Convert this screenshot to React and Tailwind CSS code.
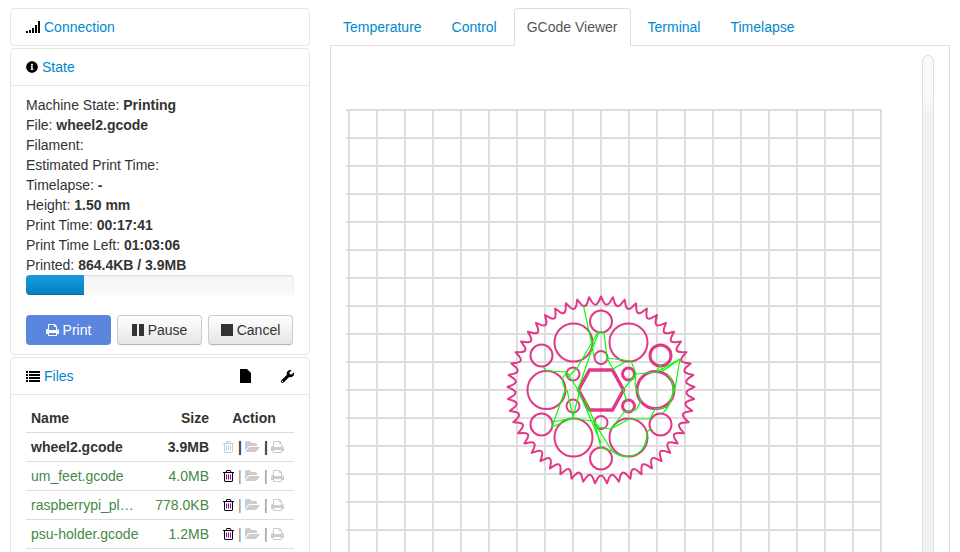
import React from "react";
import { FaInfoCircle, FaWrench } from "react-icons/fa";

function SignalIcon() {
  return (
    <svg width="14" height="12" viewBox="0 0 14 12" fill="#000" shapeRendering="crispEdges" aria-hidden="true">
      <path d="M0 10h2v2H0zM3 9h2v3H3zM6 7h2v5H6zM9 4h2v8H9zM12 0h2v12h-2z" />
    </svg>
  );
}

function ListIcon() {
  return (
    <svg width="14" height="11" viewBox="0 0 14 11" fill="#000" shapeRendering="crispEdges" aria-hidden="true">
      <path d="M0 0h2v2H0zM3 0h11v2H3zM0 3h2v2H0zM3 3h11v2H3zM0 6h2v2H0zM3 6h11v2H3zM0 9h2v2H0zM3 9h11v2H3z" />
    </svg>
  );
}

function FileIcon() {
  return (
    <svg width="11" height="14" viewBox="0 0 11 14" fill="#000" aria-hidden="true">
      <path d="M0 0h7l4 4v10H0z" />
    </svg>
  );
}

function PrintIcon() {
  return (
    <svg width="13" height="12" viewBox="64 128 1664 1536" fill="currentColor" aria-hidden="true">
      <path d="M448 1536h896v-256h-896v256zm0-640h896v-384h-160q-40 0-68-28t-28-68v-160h-640v640zm1152 64q0-26-19-45t-45-19-45 19-19 45 19 45 45 19 45-19 19-45zm128 0v416q0 13-9.5 22.5t-22.5 9.5h-224v160q0 40-28 68t-68 28h-960q-40 0-68-28t-28-68v-160h-224q-13 0-22.5-9.5t-9.5-22.5v-416q0-79 56.5-135.5t135.5-56.5h64v-544q0-40 28-68t68-28h672q40 0 88 20t76 48l152 152q28 28 48 76t20 88v256h64q79 0 135.5 56.5t56.5 135.5z" />
    </svg>
  );
}

function TrashIcon({ bars }) {
  return (
    <svg width="11" height="12" viewBox="0 0 1408 1536" fill="currentColor" aria-hidden="true">
      <path
        fill={bars}
        d="M512 608v576q0 14-9 23t-23 9h-64q-14 0-23-9t-9-23v-576q0-14 9-23t23-9h64q14 0 23 9t9 23zM768 608v576q0 14-9 23t-23 9h-64q-14 0-23-9t-9-23v-576q0-14 9-23t23-9h64q14 0 23 9t9 23zM1024 608v576q0 14-9 23t-23 9h-64q-14 0-23-9t-9-23v-576q0-14 9-23t23-9h64q14 0 23 9t9 23z"
      />
      <path
        fillRule="evenodd"
        d="M1152 1332v-948h-896v948q0 22 7 40.5t14.5 27 10.5 8.5h832q3 0 10.5-8.5t14.5-27 7-40.5zM480 256h448l-48-117q-7-9-17-11h-317q-10 2-17 11zM1408 288v64q0 14-9 23t-23 9h-96v948q0 83-47 143.5t-113 60.5h-832q-66 0-113-58.5t-47-141.5v-952h-96q-14 0-23-9t-9-23v-64q0-14 9-23t23-9h309l70-167q15-37 54-63t79-26h320q40 0 79 26t54 63l70 167h309q14 0 23 9t9 23z"
      />
    </svg>
  );
}

function FolderIcon() {
  return (
    <svg width="15" height="11" viewBox="0 128 1920 1408" fill="currentColor" aria-hidden="true">
      <path d="M1879 952q0 31-31 66l-336 396q-43 51-120.5 86.5t-143.5 35.5h-1088q-34 0-60.5-13t-26.5-43q0-31 31-66l336-396q43-51 120.5-86.5t143.5-35.5h1088q34 0 60.5 13t26.5 43zM1536 608v160h-832q-94 0-197 47.5t-164 119.5l-337 396-5 6q0-4-.5-12.5t-.5-12.5v-960q0-92 66-158t158-66h320q92 0 158 66t66 158v32h544q92 0 158 66t66 158z" />
    </svg>
  );
}

const stateRows = [
  ["Machine State:", "Printing"],
  ["File:", "wheel2.gcode"],
  ["Filament:", ""],
  ["Estimated Print Time:", ""],
  ["Timelapse:", "-"],
  ["Height:", "1.50 mm"],
  ["Print Time:", "00:17:41"],
  ["Print Time Left:", "01:03:06"],
  ["Printed:", "864.4KB / 3.9MB"],
];

const files = [
  { name: "wheel2.gcode", size: "3.9MB", active: true },
  { name: "um_feet.gcode", size: "4.0MB" },
  { name: "raspberrypi_pl…", size: "778.0KB" },
  { name: "psu-holder.gcode", size: "1.2MB" },
];

const tabs = ["Temperature", "Control", "GCode Viewer", "Terminal", "Timelapse"];

const TEETH = 49;

function gearPath() {
  const step = (2 * Math.PI) / TEETH;
  const pt = (r, a) => `${(r * Math.sin(a)).toFixed(2)} ${(-r * Math.cos(a)).toFixed(2)}`;
  let d = `M${pt(93.5, 0)}`;
  for (let i = 0; i < TEETH; i++) {
    const a = i * step;
    d += `L${pt(88.5, a + step * 0.2)}C${pt(84.5, a + step * 0.4)} ${pt(84.5, a + step * 0.6)} ${pt(88.5, a + step * 0.8)}L${pt(93.5, a + step)}`;
  }
  return d + "Z";
}

const holes = [
  [-27.5, -47.5, 19], [27.5, -47.5, 19], [-54.5, 0, 19], [-27.5, 47.5, 19], [27.5, 47.5, 19],
  [0, -68.5, 11], [-59.5, -34.5, 11], [-59.5, 34.5, 11], [59.5, 34.5, 11], [0, 68.5, 11],
  [0, -32.5, 6.5], [-28, -16, 6.5], [-28, 16, 6.5], [0, 32.5, 6.5],
];
const thickHoles = [[54.5, 0, 18.5], [59.5, -34.5, 10.5], [27.5, -16, 6], [27.5, 16, 6]];

const travelMoves = [
  "M-17.5-84 -9-45 -7-34",
  "M-34-12-24-22-3-58H3L6-32 30-29 35-16 56-18 79-31 74-2 67 17 62 23",
  "M-2-58-10-38-23 0",
  "M6-32 12-21 24-28",
  "M35-16 22 0 26 11",
  "M56-18 59-25 62-19 79-31",
  "M-58-23-54-19-34-18-23 0 0 53",
  "M-34-18-39-11-36 0-49 37-28 28-4 32",
  "M-34 0-28 27-21 0",
  "M-49 32-28 28",
  "M-16 10-6 33 0 58 11 61-4 37",
  "M-6 33-2 37 10 39 23 22 35 20 40 11 34-5 35-16",
  "M10 39 28 29H49L54 19 67 17",
  "M50 38 46 42",
  "M11 61Q22 70 36 64 46 58 46 42",
  "M66-16Q78-4 67 17",
];

function GcodeCanvas() {
  const cols = Array.from({ length: 20 }, (_, i) => 3 + 28 * i);
  const rows = Array.from({ length: 20 }, (_, i) => 55 + 28 * i);
  return (
    <svg width="536" height="600" viewBox="0 0 536 600" className="shrink-0" role="img" aria-label="Layer preview">
      <g stroke="#ddd" strokeWidth="2">
        {cols.map((x) => <path key={x} d={`M${x} 55V588`} />)}
        {rows.map((y) => <path key={y} d={`M0 ${y}H536`} />)}
      </g>
      <g transform="translate(255 335)" fill="none" strokeLinejoin="round">
        <g stroke="#dd1c77" strokeOpacity="0.88">
          <path d={gearPath()} strokeWidth="2" />
          {holes.map(([x, y, r]) => <circle key={`${x},${y}`} cx={x} cy={y} r={r} strokeWidth="2" />)}
          {thickHoles.map(([x, y, r]) => <circle key={`${x},${y}`} cx={x} cy={y} r={r} strokeWidth="3" />)}
          <path d="M-11.5-20H11.5L22.5 0 11.5 20H-11.5L-22.5 0Z" strokeWidth="3.5" strokeLinejoin="miter" />
        </g>
        <path d={travelMoves.join("")} stroke="#0f0" strokeWidth="1.2" />
      </g>
    </svg>
  );
}

function Card({ icon, title, actions, children }) {
  return (
    <section className="rounded border border-[#e5e5e5]">
      <h2 className="flex h-9 items-center gap-1 px-[15px]">
        {icon}
        <a href="#" className="text-[#0088cc]">{title}</a>
        {actions}
      </h2>
      {children && <div className="border-t border-[#e5e5e5] px-[15px] py-[9px]">{children}</div>}
    </section>
  );
}

const buttonBase = "flex h-[30px] w-[85px] items-center justify-center gap-1 rounded";
const buttonGrey =
  "border border-[#ccc] border-b-[#b3b3b3] bg-linear-to-b from-white to-[#e6e6e6] shadow-[0_1px_2px_rgba(0,0,0,0.05)]";

function FileRow({ file }) {
  const rowClass = file.active ? "font-bold text-[#333]" : "text-[#468847]";
  const divider = file.active ? "ml-1 mr-[3px] w-1 text-[#333]" : "ml-1 mr-[3px] w-1 text-[#888]";
  return (
    <tr className={`border-b border-[#ddd] ${rowClass}`}>
      <td className="h-[29px] px-[5px] whitespace-nowrap">{file.name}</td>
      <td className="px-[5px] text-right">{file.size}</td>
      <td className="pl-[9px]">
        <div className="flex items-center text-[#ccc]">
          <button aria-label={`Delete ${file.name}`} disabled={file.active} className={file.active ? "text-[#ccc]" : "text-black"}>
            <TrashIcon bars={file.active ? "#ccc" : "#909"} />
          </button>
          <span className={divider}>|</span>
          <button aria-label={`Load ${file.name}`} disabled><FolderIcon /></button>
          <span className={divider}>|</span>
          <button aria-label={`Print ${file.name}`} disabled><PrintIcon /></button>
        </div>
      </td>
    </tr>
  );
}

export default function App() {
  return (
    <div className="flex h-screen gap-5 overflow-hidden bg-white px-[10px] pt-2 font-['Liberation_Sans',Arial,sans-serif] text-[14px] leading-5 text-[#333]">
      <aside className="flex w-[300px] shrink-0 flex-col gap-[2px]">
        <Card icon={<SignalIcon />} title="Connection" />
        <Card icon={<FaInfoCircle size={12} color="#000" />} title="State">
          {stateRows.map(([label, value]) => (
            <p key={label}>
              {label} <strong>{value}</strong>
            </p>
          ))}
          <div
            role="progressbar"
            aria-label="Print progress"
            aria-valuenow={22}
            className="mb-5 h-5 overflow-hidden rounded bg-linear-to-b from-[#f5f5f5] to-[#f9f9f9] shadow-[inset_0_1px_2px_rgba(0,0,0,0.1)]"
          >
            <div className="h-full w-[58px] bg-linear-to-b from-[#149bdf] to-[#0480be] shadow-[inset_0_-1px_0_rgba(0,0,0,0.15)]" />
          </div>
          <div className="flex gap-[6px]">
            <button className={`${buttonBase} bg-[#5b86de] text-white`}><PrintIcon />Print</button>
            <button className={`${buttonBase} ${buttonGrey}`}>
              <svg width="12" height="12" viewBox="0 0 12 12" fill="#333" aria-hidden="true"><path d="M0 0h5v12H0zM7 0h5v12H7z" /></svg>
              Pause
            </button>
            <button className={`${buttonBase} ${buttonGrey}`}>
              <svg width="12" height="12" viewBox="0 0 12 12" fill="#333" aria-hidden="true"><path d="M0 0h12v12H0z" /></svg>
              Cancel
            </button>
          </div>
        </Card>
        <Card
          icon={<ListIcon />}
          title="Files"
          actions={
            <span className="ml-auto flex items-center gap-[30px]">
              <button aria-label="New file"><FileIcon /></button>
              <button aria-label="File settings"><FaWrench size={13} color="#000" /></button>
            </span>
          }
        >
          <table className="w-full table-fixed border-collapse">
            <thead>
              <tr className="border-b border-[#ddd]">
                <th className="h-7 px-[5px] text-left">Name</th>
                <th className="w-[70px] px-[5px] text-right">Size</th>
                <th className="w-20">Action</th>
              </tr>
            </thead>
            <tbody>
              {files.map((file) => <FileRow key={file.name} file={file} />)}
            </tbody>
          </table>
        </Card>
      </aside>
      <main className="flex min-w-0 flex-1 flex-col">
        <nav className="flex gap-1 border-b border-[#ddd]">
          {tabs.map((tab) => (
            <a
              key={tab}
              href="#"
              className={
                tab === "GCode Viewer"
                  ? "-mb-px rounded-t border border-[#ddd] border-b-white bg-white px-3 py-2 text-[#555]"
                  : "border border-b-0 border-transparent px-3 py-2 text-[#0088cc]"
              }
            >
              {tab}
            </a>
          ))}
        </nav>
        <div className="flex flex-1 justify-between border-x border-[#ddd] px-[15px] pt-[9px]">
          <GcodeCanvas />
          <input
            type="range"
            aria-label="Layer"
            className="h-[600px] w-3 appearance-none rounded-full border border-[#ddd] bg-linear-to-b from-[#f8fafc] from-[40px] to-[#edf2f6] to-[60px] [&::-webkit-slider-thumb]:h-0 [&::-webkit-slider-thumb]:w-0 [&::-webkit-slider-thumb]:appearance-none"
          />
        </div>
      </main>
    </div>
  );
}
